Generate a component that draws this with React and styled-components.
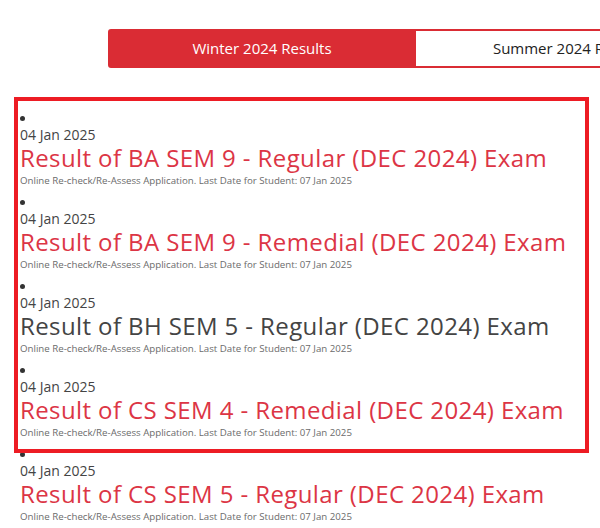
import React from "react";
import styled, { createGlobalStyle } from "styled-components";

const Global = createGlobalStyle`
  html, body { margin: 0; padding: 0; background: #fff; }
  body { font-family: "Open Sans", "Liberation Sans", sans-serif; overflow: hidden; }
`;

const Page = styled.div`
  width: 600px;
  height: 528px;
  overflow: hidden;
  padding-top: 29px;
  box-sizing: border-box;
`;

const Tabs = styled.div`
  display: flex;
  margin-left: 108px;
  height: 39px;
  width: 616px;
`;

const Tab = styled.button`
  flex: 0 0 308px;
  height: 39px;
  box-sizing: border-box;
  border: 2px solid #da2c34;
  border-left-width: ${(p) => (p.$active ? "2px" : "0")};
  border-radius: ${(p) => (p.$active ? "3px 0 0 3px" : "0")};
  background: ${(p) => (p.$active ? "#da2c34" : "#fff")};
  color: ${(p) => (p.$active ? "#fff" : "#222")};
  font-family: inherit;
  font-size: 15px;
  padding: 0 0 1px;
  cursor: pointer;
`;

const ListWrap = styled.div`
  position: relative;
  padding-top: 44px;
`;

const List = styled.ul`
  list-style: none;
  margin: 0;
  padding: 0 0 0 20px;
`;

const Item = styled.li`
  height: 84px;
  box-sizing: border-box;
  padding-top: 4px;
`;

const Bullet = styled.span`
  display: block;
  width: 5px;
  height: 5px;
  border-radius: 50%;
  background: #333;
`;

const DateText = styled.div`
  font-size: 14px;
  line-height: 18px;
  color: #444;
  margin-top: 5px;
`;

const Title = styled.a`
  display: block;
  font-size: 24px;
  line-height: 28px;
  letter-spacing: 0.4px;
  color: ${(p) => (p.$visited ? "#444" : "#dc3545")};
  text-decoration: none;
  white-space: nowrap;
`;

const Note = styled.div`
  font-size: 9.7px;
  line-height: 13px;
  color: #6b6b6b;
  margin-top: 2px;
`;

const Highlight = styled.div`
  position: absolute;
  left: 14px;
  top: 29px;
  width: 575px;
  height: 356px;
  box-sizing: border-box;
  border: 4px solid #ed1c24;
  pointer-events: none;
`;

const results = [
  { title: "Result of BA SEM 9 - Regular (DEC 2024) Exam" },
  { title: "Result of BA SEM 9 - Remedial (DEC 2024) Exam" },
  { title: "Result of BH SEM 5 - Regular (DEC 2024) Exam", visited: true },
  { title: "Result of CS SEM 4 - Remedial (DEC 2024) Exam" },
  { title: "Result of CS SEM 5 - Regular (DEC 2024) Exam" },
];

export default function App() {
  return (
    <Page>
      <Global />
      <Tabs>
        <Tab $active>Winter 2024 Results</Tab>
        <Tab>Summer 2024 Results</Tab>
      </Tabs>
      <ListWrap>
        <List>
          {results.map((r) => (
            <Item key={r.title}>
              <Bullet />
              <DateText>04 Jan 2025</DateText>
              <Title href="#" $visited={r.visited}>{r.title}</Title>
              <Note>Online Re-check/Re-Assess Application. Last Date for Student: 07 Jan 2025</Note>
            </Item>
          ))}
        </List>
        <Highlight />
      </ListWrap>
    </Page>
  );
}
